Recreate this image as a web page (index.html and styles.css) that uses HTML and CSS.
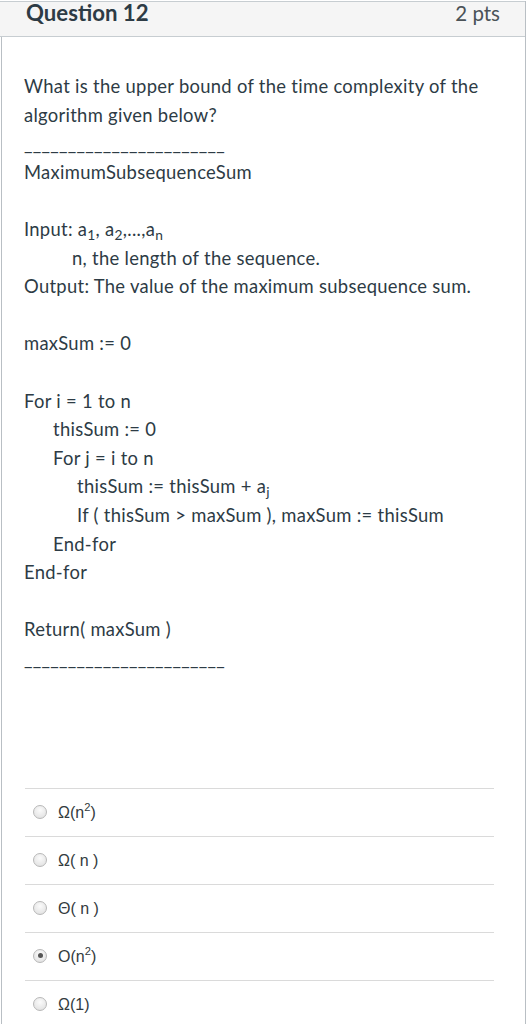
FILE: index.html
```html
<!DOCTYPE html>
<html>
<head>
<meta charset="utf-8">
<link rel="stylesheet" href="styles.css">
</head>
<body>
<div class="question">
  <div class="header">
    <span class="title">Question 12</span>
    <span class="pts">2 pts</span>
  </div>
  <div class="body">
    <div class="text">
      <div class="line">What is the upper bound of the time complexity of the algorithm given below?</div>
      <div class="line">_______________________</div>
      <div class="line">MaximumSubsequenceSum</div>
      <div class="line blank"></div>
      <div class="line">Input: a<sub>1</sub>, a<sub>2</sub>,...,a<sub>n</sub></div>
      <div class="line ind2">n, the length of the sequence.</div>
      <div class="line">Output: The value of the maximum subsequence sum.</div>
      <div class="line blank"></div>
      <div class="line">maxSum := 0</div>
      <div class="line blank"></div>
      <div class="line">For i = 1 to n</div>
      <div class="line ind1">thisSum := 0</div>
      <div class="line ind1">For j = i to n</div>
      <div class="line ind3">thisSum := thisSum + a<sub>j</sub></div>
      <div class="line ind3">If ( thisSum &gt; maxSum ), maxSum := thisSum</div>
      <div class="line ind1">End-for</div>
      <div class="line">End-for</div>
      <div class="line blank"></div>
      <div class="line">Return( maxSum )</div>
      <div class="line">_______________________</div>
    </div>
    <div class="answers">
      <label class="answer"><input type="radio" name="q12" class="radio"><span class="label">Ω(n<sup>2</sup>)</span></label>
      <label class="answer"><input type="radio" name="q12" class="radio"><span class="label">Ω( n )</span></label>
      <label class="answer"><input type="radio" name="q12" class="radio"><span class="label">Θ( n )</span></label>
      <label class="answer"><input type="radio" name="q12" class="radio" checked><span class="label">O(n<sup>2</sup>)</span></label>
      <label class="answer"><input type="radio" name="q12" class="radio"><span class="label">Ω(1)</span></label>
    </div>
  </div>
</div>
</body>
</html>
```
FILE: styles.css
```css
html, body {
  margin: 0;
  padding: 0;
  background: #ffffff;
}
body {
  padding-top: 1px;
  font-family: Lato, "Liberation Sans", sans-serif;
  color: #2d3b45;
}
.question {
  width: 523px;
  margin-left: 1px;
  border-left: 1px solid #b9bfc4;
  border-right: 1px solid #b9bfc4;
}
.header {
  display: flex;
  justify-content: space-between;
  align-items: baseline;
  height: 32px;
  margin-left: -2px;
  padding: 2px 25px 0 26px;
  background: #f5f5f5;
  border-top: 1px solid #c7cdd1;
  border-bottom: 1px solid #c7cdd1;
  box-sizing: content-box;
}
.title {
  font-weight: 700;
  font-size: 22.2px;
  line-height: 17px;
  color: #2d3b45;
}
.pts {
  font-size: 20.5px;
  line-height: 17px;
  color: #4a5257;
}
.body {
  padding: 35px 31px 0 22px;
}
.text {
  font-size: 18.4px;
  letter-spacing: 0.3px;
  line-height: 28.6px;
}
.line {
  min-height: 28.6px;
  white-space: nowrap;
}
.line:first-child {
  white-space: normal;
}
.ind1 { padding-left: 29px; }
.ind2 { padding-left: 48px; }
.ind3 { padding-left: 53px; }
sub {
  font-size: 75%;
  line-height: 0;
  vertical-align: -0.3em;
}
.answers {
  margin-top: 116px;
  margin-left: 1px;
}
.answer {
  display: flex;
  align-items: center;
  height: 47px;
  border-top: 1px solid #dadada;
  font-family: "Liberation Sans", Arial, sans-serif;
  font-size: 16px;
  color: #333b40;
}
.radio {
  appearance: none;
  -webkit-appearance: none;
  box-sizing: border-box;
  width: 14px;
  height: 14px;
  margin: 0 11px 2px 8px;
  border-radius: 50%;
  border: 1px solid #b8b8b8;
  background: radial-gradient(circle at 50% 35%, #fbfbfb 0%, #e6e6e6 70%, #d9d9d9 100%);
  position: relative;
}
.radio:checked::after {
  content: "";
  position: absolute;
  left: 3.5px;
  top: 3.5px;
  width: 5px;
  height: 5px;
  border-radius: 50%;
  background: #555555;
}
.label sup {
  font-size: 70%;
  line-height: 0;
  vertical-align: 0.6em;
}
```
